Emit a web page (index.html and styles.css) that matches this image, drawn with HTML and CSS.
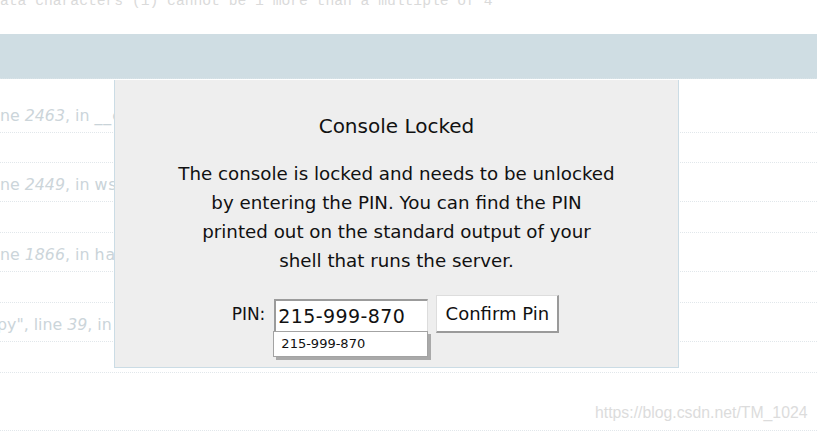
FILE: index.html
```html
<!DOCTYPE html>
<html>
<head>
<meta charset="utf-8">
<title>Console Locked</title>
<link rel="stylesheet" href="styles.css">
</head>
<body>
<div class="page">
  <div class="errline"><p>data characters (1) cannot be 1 more than a multiple of 4</p></div>
  <div class="band"></div>
  <div class="frames">
    <div class="row r-first"><span class="src">ne <em>2463</em>, in <span class="fn">__call__</span></span></div>
    <div class="row gap"></div>
    <div class="row"><span class="src">ne <em>2449</em>, in <span class="fn">wsgi_app</span></span></div>
    <div class="row gap"></div>
    <div class="row"><span class="src">ne <em>1866</em>, in <span class="fn">handle_exception</span></span></div>
    <div class="row gap"></div>
    <div class="row"><span class="src shift">py", line <em>39</em>, in <span class="fn">index</span></span></div>
    <div class="row gap"></div>
    <div class="row r-last"></div>
  </div>

  <div class="modal">
    <h3 class="title">Console Locked</h3>
    <p class="msg">The console is locked and needs to be unlocked<br>by entering the PIN. You can find the PIN<br>printed out on the standard output of your<br>shell that runs the server.</p>
    <form class="pinrow">
      <label class="pinlabel">PIN:</label>
      <div class="inputwrap">
        <input class="pininput" type="text" value="215-999-870">
        <div class="suggest">215-999-870</div>
      </div>
      <button class="confirm" type="button">Confirm Pin</button>
    </form>
  </div>

  <div class="watermark">https://blog.csdn.net/TM_1024</div>
</div>
</body>
</html>
```

FILE: styles.css
```css
html, body {
  margin: 0;
  padding: 0;
  background: #ffffff;
  overflow: hidden;
}

.page {
  position: relative;
  width: 817px;
  height: 432px;
  overflow: hidden;
}

.errline {
  height: 34px;
  overflow: hidden;
}

.errline p {
  margin: -7px 0 0 -8.8px;
  font-family: "Liberation Mono", monospace;
  font-size: 14.67px;
  line-height: 16px;
  color: #dadada;
  white-space: nowrap;
}

.band {
  height: 45px;
  box-sizing: border-box;
  background: #cfdde3;
  border-bottom: 1px dotted #d9e3e8;
}

.frames {
  display: flex;
  flex-direction: column;
}

.row {
  box-sizing: border-box;
  height: 39px;
  border-bottom: 1px dotted #e1e7eb;
  display: flex;
  align-items: flex-end;
  padding-bottom: 6px;
  font-family: "DejaVu Sans", sans-serif;
  font-size: 15.8px;
  line-height: 20px;
  color: #cbd5da;
  white-space: nowrap;
}

.row.gap {
  height: 31px;
}

.row.r-first {
  height: 54px;
}

.row.gap:nth-child(2) {
  height: 30px;
}

.row.r-last {
  height: 58px;
}

.src em {
  font-style: italic;
  color: #ccd5da;
}

.src .fn {
  color: #c9d3d8;
  letter-spacing: 1px;
}

.src.shift {
  margin-left: -3px;
}

.modal {
  position: absolute;
  left: 114px;
  top: 80px;
  width: 565px;
  height: 288px;
  box-sizing: border-box;
  background: #eeeeee;
  border: 1px solid #cbdce5;
  border-top: none;
  display: flex;
  flex-direction: column;
  align-items: center;
  font-family: "DejaVu Sans", sans-serif;
  color: #111111;
}

.title {
  margin: 34px 0 0;
  font-size: 20px;
  font-weight: normal;
  line-height: 24px;
}

.msg {
  margin: 21px 0 0;
  font-size: 18.25px;
  line-height: 29px;
  text-align: center;
}

.pinrow {
  margin: 20px 0 0 -2px;
  display: flex;
  align-items: center;
  gap: 8px;
}

.pinlabel {
  font-size: 17px;
  margin-right: 1px;
}

.inputwrap {
  position: relative;
  width: 154px;
  height: 34px;
  margin-top: 3px;
}

.pininput {
  box-sizing: border-box;
  width: 154px;
  height: 34px;
  margin: 0;
  padding: 0 0 0 2px;
  border-style: solid;
  border-width: 2px 1px 1px 2px;
  border-color: #9b9b9b #dcdcdc #dcdcdc #9b9b9b;
  background: #ffffff;
  font-family: "DejaVu Sans", sans-serif;
  font-size: 19px;
  letter-spacing: 0.4px;
  color: #111111;
  outline: none;
}

.suggest {
  position: absolute;
  left: -1px;
  top: 32px;
  width: 155px;
  height: 26px;
  box-sizing: border-box;
  background: #ffffff;
  border: 1px solid #a3a3a3;
  box-shadow: 3px 3px 0 #a9a9a9;
  padding-left: 7px;
  font-family: "DejaVu Sans", sans-serif;
  font-size: 13px;
  line-height: 24px;
  color: #111111;
}

.confirm {
  box-sizing: border-box;
  width: 123px;
  height: 38px;
  margin: 0;
  padding: 0;
  background: #ffffff;
  border-style: solid;
  border-width: 1px 2px 2px 1px;
  border-color: #dddddd #9a9a9a #9a9a9a #dddddd;
  font-family: "DejaVu Sans", sans-serif;
  font-size: 18px;
  color: #111111;
}

.watermark {
  position: absolute;
  left: 595px;
  top: 404px;
  font-family: "Liberation Sans", sans-serif;
  font-size: 15.8px;
  line-height: 18px;
  color: #dcdcdc;
  white-space: nowrap;
}
```
